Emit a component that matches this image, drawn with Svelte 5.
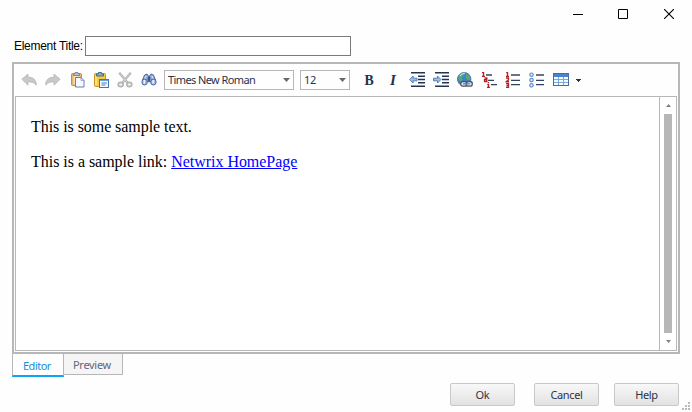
<script>
  let title = $state('');
  const buttons = ['Ok', 'Cancel', 'Help'];
</script>

{#snippet arrow()}
  <svg width="7" height="4" viewBox="0 0 7 4"><path d="M0 0h7L3.5 4z" fill="#686868" /></svg>
{/snippet}

<main>
  <header>
    <svg width="10" height="10" viewBox="0 0 10 10"><path d="M0 5.5h10" stroke="#000" /></svg>
    <svg width="10" height="10" viewBox="0 0 10 10"><path d="M.5.5h9v9h-9z" fill="none" stroke="#000" /></svg>
    <svg width="10" height="10" viewBox="0 0 10 10"><path d="M0 0l10 10M10 0L0 10" stroke="#000" stroke-width="1.1" /></svg>
  </header>

  <label class="title"><span>Element Title:</span><input bind:value={title} /></label>

  <section class="editor">
    <div class="toolbar">
      <i><svg viewBox="0 0 16 16"><path d="M.8 7.2L7 2v3.1c5.4.1 8.5 3 8.3 8.1-2-2.5-4.3-3.5-8.3-3.3v3.3z" fill="#c8c8c8" stroke="#b2b2b2" stroke-width=".7" /></svg></i>
      <i><svg viewBox="0 0 16 16"><path d="M15.2 7.2L9 2v3.1C3.6 5.2.5 8.1.7 13.2 2.7 10.7 5 9.7 9 9.9v3.3z" fill="#c8c8c8" stroke="#b2b2b2" stroke-width=".7" /></svg></i>
      <i><svg viewBox="0 0 16 16">
        <rect x="2.500" y="1.500" width="10" height="12" rx="1" fill="#e9b66d" stroke="#c58d45" />
        <rect x="4.500" y="3.500" width="6" height="9" fill="#f8dfb4" />
        <path d="M4.500 3.500V1.600h1.600V.5h2.800v1.100h1.600v1.900z" fill="#b9c4dc" stroke="#6574a0" stroke-width=".8" />
        <path d="M6.500 5.500h5.500l3 3v6.500H6.500z" fill="#f6f9ff" stroke="#6b7cb0" /><path d="M12 5.500v3h3" fill="none" stroke="#8a98c2" stroke-width=".8" />
      </svg></i>
      <i><svg viewBox="0 0 16 16">
        <rect x="1.500" y="1.500" width="11" height="13" rx="1" fill="#f8cb3c" stroke="#cd9626" />
        <path d="M3 4v9" stroke="#ffe783" stroke-width="1.500" />
        <path d="M3.500 4V2h2V.5h3V2h2v2z" fill="#8cb6c9" stroke="#38647e" stroke-width=".9" />
        <rect x="6.500" y="7.500" width="9" height="8" fill="#f5faff" stroke="#4475b5" /><path d="M7 8.500h8" stroke="#6fa3de" /><path d="M8.500 11H14M8.500 13h4" stroke="#477dbd" />
      </svg></i>
      <i><svg viewBox="0 0 16 16">
        <path d="M2.200.7L10.800 11M13.800.7L5.200 11" stroke="#b0b0b0" stroke-width="2.300" /><path d="M2.600 1.200l7.300 8.800M13.400 1.200L6.100 10" stroke="#dadada" stroke-width=".8" />
        <ellipse cx="3.700" cy="12.500" rx="2.500" ry="2.100" fill="#eee" stroke="#b4b4b4" stroke-width="1.600" /><ellipse cx="12.300" cy="12.500" rx="2.500" ry="2.100" fill="#eee" stroke="#b4b4b4" stroke-width="1.600" />
      </svg></i>
      <i><svg viewBox="0 0 16 16">
        <path d="M3.500 3l2.500-1 1.500 2v6L1.500 8zM12.500 3L10 2 8.500 4v6l6-2z" fill="#8da6d6" stroke="#4a6298" stroke-width=".9" />
        <path d="M6.800 5h2.400v3.500H6.800z" fill="#3b5185" />
        <path d="M5.200 4L3.500 7M10.800 4l1.700 3" stroke="#d2dff8" stroke-width="1.300" />
        <ellipse cx="3.600" cy="10" rx="2.700" ry="3" fill="#a9bfe8" stroke="#4c639b" /><ellipse cx="12.400" cy="10" rx="2.700" ry="3" fill="#a9bfe8" stroke="#4c639b" />
        <path d="M3.300 8v3.500M12.100 8v3.500" stroke="#f3f7ff" stroke-width="1.300" />
      </svg></i>
      <div class="combo font"><span>Times New Roman</span>{@render arrow()}</div>
      <div class="combo size"><span>12</span>{@render arrow()}</div>
      <i><b>B</b></i>
      <i><em>I</em></i>
      {#each [false, true] as inward}
        <i><svg viewBox="0 0 16 16">
          <path d="M2 .7h14M9 4.300h7M9 7.500h7M9 10.700h7M2 14.200h14" stroke="#26334f" stroke-width="1.400" />
          <path d={inward ? 'M8 7.5L4.500 4v2.200H.5v2.600h4V11z' : 'M.6 7.5L4.1 4v2.200H8v2.600H4.1V11z'} fill="#8fc1f2" stroke="#4578b2" stroke-width=".9" />
        </svg></i>
      {/each}
      <i><svg viewBox="0 0 16 16">
        <circle cx="7.200" cy="7.200" r="6.700" fill="#4083d1" stroke="#5878ab" />
        <path d="M2 3.500l3-2.300 2.500.5L6 4.500 4.500 5l1 2.500L4 10.500 1.500 7zM9 2l3.500 2 .7 3.500-2.200 1-2-2.500z" fill="#55ad64" />
        <path d="M3 4q2-3 5-2.500" fill="none" stroke="#b9dcf5" stroke-width="1.200" />
        <rect x="3.700" y="9.500" width="6.300" height="4.600" rx="2.200" fill="#e2e6ec" stroke="#4b5871" stroke-width="1.300" /><rect x="9.200" y="9.500" width="6.100" height="4.600" rx="2.200" fill="#e2e6ec" stroke="#4b5871" stroke-width="1.300" />
        <path d="M6 11.800h7" stroke="#6b7890" stroke-width="1.200" />
      </svg></i>
      <i><svg viewBox="0 0 16 16">
        <path d="M5 3h6M7 8.300h6M10 12.700h6" stroke="#334461" stroke-width="1.300" />
        <path d="M1 .7h1.500V4M1 4.300h3M3.500 6h2.300v3.500H3.500V7.700h2.300M5.500 9.500h1M7.500 10v1M6.300 12.500h1.200v3M6 15.300h3" fill="none" stroke="#b22020" stroke-width="1.300" />
      </svg></i>
      <i><svg viewBox="0 0 16 16">
        <path d="M6 3h9M6 8.300h9M6 12.700h9" stroke="#334461" stroke-width="1.300" />
        <path d="M1.200.7h1.300V4M1 4.300h3M1 6h2.500v1.700l-2 1.800H4M1 11.500h2.500v4H1M1.500 13.500h2" fill="none" stroke="#b22020" stroke-width="1.300" />
      </svg></i>
      <i><svg viewBox="0 0 16 16">
        <path d="M7 3h8M7 8.300h8M7 12.700h8" stroke="#334461" stroke-width="1.300" />
        <g fill="#edf7ff" stroke="#5d90cd" stroke-width="1.200"><circle cx="2.500" cy="2.700" r="1.700" /><circle cx="2.500" cy="8" r="1.700" /><circle cx="2.500" cy="13.300" r="1.700" /></g>
      </svg></i>
      <i><svg viewBox="0 0 16 16">
        <rect x=".5" y="1.500" width="15" height="12" fill="#f5faff" stroke="#3f6cad" /><path d="M1 2h14v3H1z" fill="#4c83cb" /><path d="M5.500 5v8M10.500 5v8M1 7.500h14M1 10.500h14" stroke="#7ba7df" />
      </svg></i>
      <svg class="more" width="5" height="3" viewBox="0 0 5 3"><path d="M0 0h5v1H4v1H3v1H2V2H1V1H0z" fill="#333" /></svg>
    </div>

    <div class="document">
      <div class="page">
        <p>This is some sample text.</p>
        <p class="second">This is a sample link:{' '}<a href="#home">Netwrix HomePage</a></p>
      </div>
      <div class="scroll">
        <svg width="5" height="3" viewBox="0 0 5 3"><path d="M0 3h5L2.500 0z" fill="#808080" /></svg>
        <div class="thumb"></div>
        <svg width="5" height="3" viewBox="0 0 5 3"><path d="M0 0h5L2.500 3z" fill="#808080" /></svg>
      </div>
    </div>
  </section>

  <nav><div class="tab active">Editor</div><div class="tab">Preview</div></nav>

  <footer>
    {#each buttons as name}<button>{name}</button>{/each}
    <svg class="grip" width="8" height="8" viewBox="0 0 8 8"><path d="M6 0h2v2H6zM3 3h2v2H3zM6 3h2v2H6zM0 6h2v2H0zM3 6h2v2H3zM6 6h2v2H6z" fill="#bbb" /></svg>
  </footer>
</main>

<style>
  :global(body) { margin: 0; background: #fff; overflow: hidden; }
  * { box-sizing: border-box; }
  svg { display: block; flex: none; }
  main { width: 692px; height: 412px; background: #fefefe; font: 11px "Noto Sans", sans-serif; color: #2f3148; }
  header { height: 36px; display: flex; justify-content: flex-end; gap: 36px; padding: 9px 18px 0 0; }
  header svg:first-child { margin-right: -1px; }
  .title { height: 20px; margin-left: 14px; display: flex; align-items: center; font: 12px "Liberation Sans", sans-serif; color: #000; }
  .title span { width: 71px; white-space: nowrap; letter-spacing: -.28px; }
  input { width: 266px; height: 20px; border: 1px solid #7a7a7a; background: #fff; padding: 1px 4px; font: inherit; outline: 0; }
  .editor { width: 668px; height: 292px; margin: 6px 0 0 12px; border: 2px solid #b7b7b7; padding: 0 1px 1px; }
  .toolbar { height: 32px; display: flex; align-items: center; padding-left: 2px; }
  i { width: 24px; height: 24px; display: flex; align-items: center; justify-content: center; flex: none; }
  i svg { width: 16px; height: 16px; }
  b, em { font: bold 15px/20px "Liberation Serif", serif; color: #25324a; }
  b { transform: scaleX(.92); }
  em { font-style: italic; }
  .combo { height: 20px; border: 1px solid #b7b7b7; display: flex; align-items: center; justify-content: space-between; padding: 0 3px; line-height: 18px; white-space: nowrap; }
  .font { width: 130px; margin-left: 3px; letter-spacing: -.6px; }
  .size { width: 50px; margin: 0 7px 0 6px; letter-spacing: -.3px; }
  .more { margin-left: 3px; }
  .document { height: 255px; border: 1px solid #b7b7b7; display: flex; background: #fff; }
  .page { flex: 1; padding: 20px 0 0 15px; font: 16px/20px "Liberation Serif", serif; color: #000; }
  p { margin: 0 0 15px; white-space: pre; letter-spacing: -.06px; }
  .second { letter-spacing: -.03px; }
  a { color: #00f; text-decoration: underline; }
  .scroll { width: 17px; border-left: 1px solid #b7b7b7; display: flex; flex-direction: column; align-items: center; padding: 7px 0; }
  .thumb { width: 8px; height: 219px; margin: 7px 0; background: #b7b7b7; }
  nav { height: 24px; margin: -1px 0 0 12px; display: flex; align-items: flex-start; position: relative; }
  .tab { width: 59px; height: 22px; border: 1px solid #b7b7b7; border-left: 0; background: #f5f5f5; color: #69647a; padding-left: 9px; line-height: 21px; letter-spacing: -.3px; }
  .active { width: 52px; height: 24px; background: #fff; color: #1590db; border-left: 1px solid #b7b7b7; border-bottom: 2px solid #0da4f2; padding-left: 10px; line-height: 23px; letter-spacing: -.5px; }
  footer { display: flex; padding: 6px 0 0 450px; }
  button { width: 65px; height: 23px; border: 1px solid #c8c8c8; border-radius: 2px; background: linear-gradient(#f8f8f8, #e2e2e2); padding: 0; color: #2f3148; font: inherit; letter-spacing: -.35px; }
  button:nth-child(2) { margin: 0 15px 0 19px; }
  .grip { margin: 19px 0 0 3px; }
</style>
